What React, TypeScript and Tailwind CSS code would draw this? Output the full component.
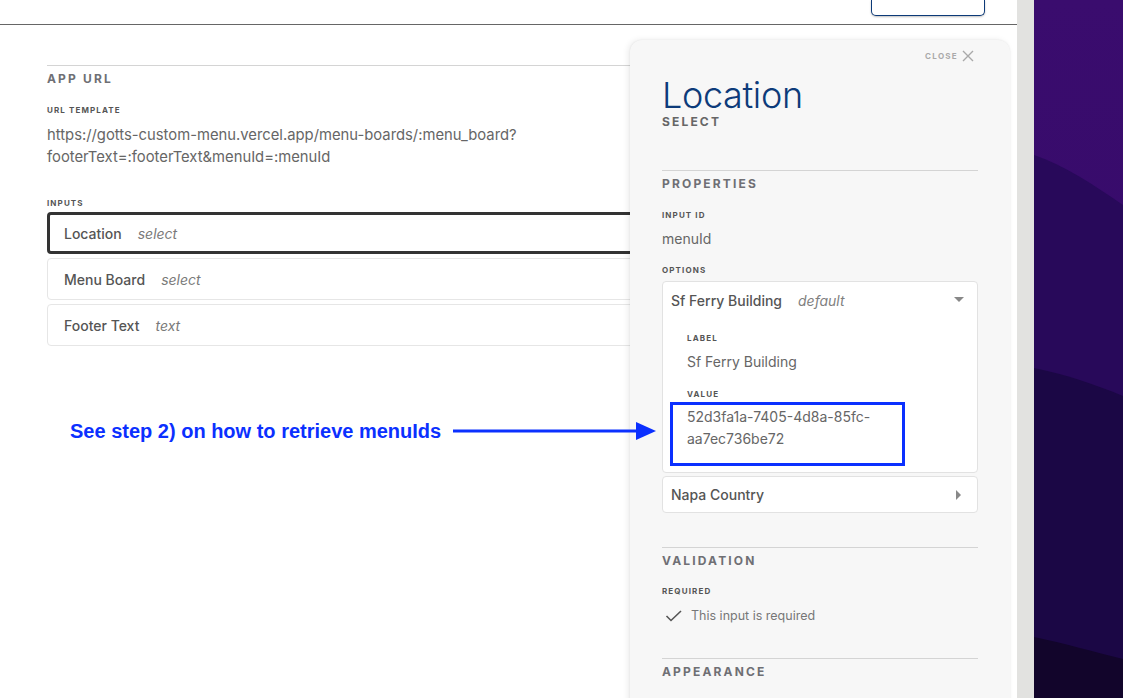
import React from "react";

const font = { fontFamily: "Inter, 'Noto Sans', sans-serif" };

function SmallLabel({ children, className = "" }: { children: React.ReactNode; className?: string }) {
  return (
    <div className={"text-[8px] font-bold tracking-[0.14em] text-[#555] leading-[12px] " + className}>{children}</div>
  );
}

function SectionHead({ children, className = "" }: { children: React.ReactNode; className?: string }) {
  return (
    <div className={"border-t border-[#d4d4d4] " + className}>
      <div className="mt-[5px] text-[12px] font-bold tracking-[0.18em] text-[#6f6f74] leading-[16px]">{children}</div>
    </div>
  );
}

function InputRow({ name, type, active }: { name: string; type: string; active?: boolean }) {
  return (
    <div
      className={
        "flex h-[42px] items-center rounded-[4px] bg-white " +
        (active ? "border-[3px] border-[#333] pl-[14px]" : "border border-[#e6e6e6] pl-[16px]")
      }
    >
      <span className="text-[14px] font-medium text-[#555]">{name}</span>
      <span className="ml-[16px] text-[14px] italic text-[#7a7a7a]">{type}</span>
    </div>
  );
}

function Purple() {
  return (
    <svg width="89" height="698" viewBox="0 0 89 698" preserveAspectRatio="none" className="block">
      <defs>
        <linearGradient id="g1" x1="0" y1="0" x2="0" y2="1">
          <stop offset="0" stopColor="#3a0c6e" />
          <stop offset="1" stopColor="#330a66" />
        </linearGradient>
      </defs>
      <rect x="0" y="0" width="89" height="698" fill="url(#g1)" />
      <path d="M0 155 C 30 165, 60 185, 89 205 L89 698 L0 698 Z" fill="#28095a" />
      <path d="M0 368 C 30 374, 60 384, 89 396 L89 698 L0 698 Z" fill="#1b0745" />
      <path d="M0 637 C 30 643, 60 652, 89 659 L89 698 L0 698 Z" fill="#12052b" />
    </svg>
  );
}

export default function App() {
  return (
    <div className="flex h-[698px] w-[1123px] overflow-hidden bg-white" style={font}>
      <div className="relative h-full w-[1017px] bg-white">
        {/* top bar */}
        <div className="flex h-[25px] justify-end border-b border-[#666] pr-[32px]">
          <div className="h-[16px] w-[114px] rounded-b-[5px] border border-t-0 border-[#0c3a78] bg-white shadow-[0_1px_2px_rgba(0,0,0,0.25)]" />
        </div>

        {/* main content */}
        <div className="px-[47px] pt-[40px]">
          <SectionHead>APP URL</SectionHead>
          <SmallLabel className="mt-[17px]">URL TEMPLATE</SmallLabel>
          <div className="mt-[8px] text-[14.8px] leading-[22px] text-[#666]">
            https://gotts-custom-menu.vercel.app/menu-boards/:menu_board?
            <br />
            footerText=:footerText&amp;menuId=:menuId
          </div>
          <SmallLabel className="mt-[29px]">INPUTS</SmallLabel>
          <div className="mt-[3px] flex flex-col gap-[4px]">
            <InputRow name="Location" type="select" active />
            <InputRow name="Menu Board" type="select" />
            <InputRow name="Footer Text" type="text" />
          </div>
        </div>

        {/* side panel */}
        <div className="absolute left-[630px] top-[40px] h-[700px] w-[380px] rounded-t-[12px] bg-[#f7f7f7] px-[32px] shadow-[-2px_0_6px_rgba(0,0,0,0.08),0_0_2px_rgba(0,0,0,0.08)]">
          <div className="flex justify-end pt-[10px] pr-[4px]">
            <div className="flex items-center gap-[4px] text-[#aaaaaa]">
              <span className="text-[8px] font-bold tracking-[0.16em]">CLOSE</span>
              <svg width="12" height="12" viewBox="0 0 12 12">
                <path d="M1 1 L11 11 M11 1 L1 11" stroke="#a9a9a9" strokeWidth="1.4" />
              </svg>
            </div>
          </div>
          <div className="mt-[15px] text-[36px] font-light leading-[36px] tracking-[-0.01em] text-[#0d3b7a]">Location</div>
          <div className="mt-[1px] text-[12px] font-bold tracking-[0.18em] text-[#666] leading-[16px]">SELECT</div>

          <SectionHead className="mt-[40px]">PROPERTIES</SectionHead>
          <SmallLabel className="mt-[17px]">INPUT ID</SmallLabel>
          <div className="mt-[8px] text-[14px] leading-[20px] text-[#666]">menuId</div>
          <SmallLabel className="mt-[15px]">OPTIONS</SmallLabel>

          <div className="mt-[5px] rounded-[4px] border border-[#e2e2e2] bg-white">
            <div className="flex h-[36px] items-center pl-[8px] pr-[13px]">
              <span className="text-[14px] font-medium text-[#555]">Sf Ferry Building</span>
              <span className="ml-[16px] text-[14px] italic text-[#7f7f7f]">default</span>
              <span className="ml-auto">
                <svg width="10" height="6" viewBox="0 0 10 6">
                  <path d="M0 0 L10 0 L5 5 Z" fill="#888" />
                </svg>
              </span>
            </div>
            <div className="pl-[24px] pb-[17px]">
              <SmallLabel className="mt-[14px]">LABEL</SmallLabel>
              <div className="mt-[8px] text-[14px] leading-[20px] text-[#666]">Sf Ferry Building</div>
              <SmallLabel className="mt-[16px]">VALUE</SmallLabel>
              <div className="relative mt-[1px]">
                <div className="py-[5px] text-[14px] leading-[22px] text-[#666]">
                  52d3fa1a-7405-4d8a-85fc-
                  <br />
                  aa7ec736be72
                </div>
                <div className="absolute left-[-17px] top-[1px] h-[64px] w-[235px] border-[3px] border-[#0b30ff]" />
              </div>
            </div>
          </div>

          <div className="mt-[3px] flex h-[37px] items-center rounded-[4px] border border-[#e2e2e2] bg-white pl-[8px] pr-[15px]">
            <span className="text-[14px] font-medium text-[#555]">Napa Country</span>
            <span className="ml-auto">
              <svg width="6" height="10" viewBox="0 0 6 10">
                <path d="M0 0 L5 5 L0 10 Z" fill="#888" />
              </svg>
            </span>
          </div>

          <SectionHead className="mt-[34px]">VALIDATION</SectionHead>
          <SmallLabel className="mt-[16px]">REQUIRED</SmallLabel>
          <div className="mt-[10px] flex items-center">
            <svg width="18" height="14" viewBox="0 0 18 14" className="ml-[3px]">
              <path d="M1.5 7 L6 11.5 L16 2" fill="none" stroke="#555" strokeWidth="1.6" />
            </svg>
            <span className="ml-[8px] text-[12.5px] leading-[18px] text-[#777]">This input is required</span>
          </div>

          <SectionHead className="mt-[33px]">APPEARANCE</SectionHead>
        </div>

        {/* annotation */}
        <div className="absolute left-[70px] top-[418px] z-10 flex items-center">
          <span
            className="text-[20px] font-bold leading-[26px] text-[#0b30ff]"
            style={{ fontFamily: "'Liberation Sans', Arial, sans-serif" }}
          >
            See step 2) on how to retrieve menuIds
          </span>
        </div>
        <svg className="absolute left-[453px] top-[421px] z-10" width="206" height="20" viewBox="0 0 206 20">
          <rect x="0" y="8.5" width="186" height="3" fill="#0b30ff" />
          <path d="M183 1 L203 10 L183 19 Z" fill="#0b30ff" />
        </svg>
      </div>
      <div className="h-full w-[17px] bg-[#e2e2e0]" />
      <div className="h-full w-[89px]">
        <Purple />
      </div>
    </div>
  );
}
